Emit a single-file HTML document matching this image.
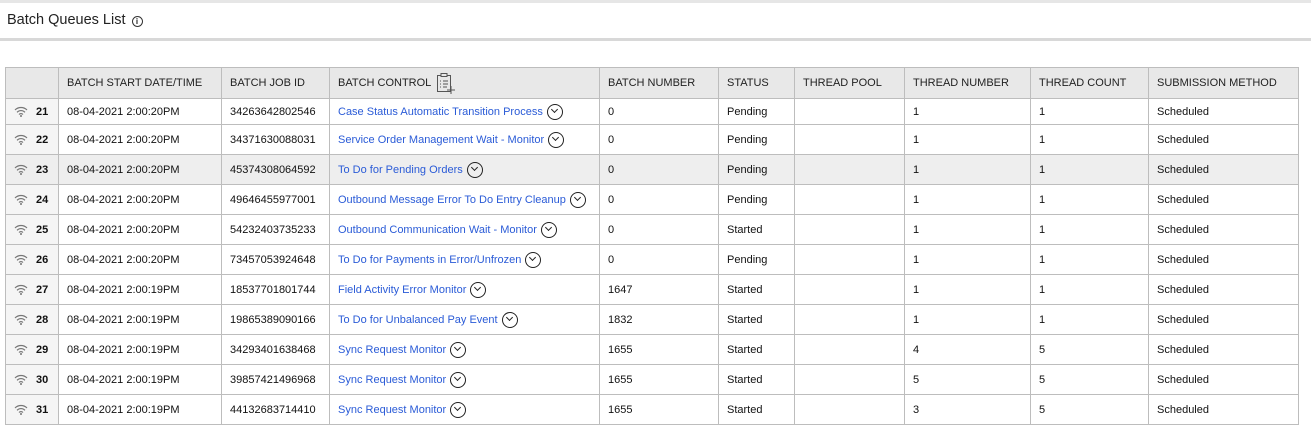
<!DOCTYPE html>
<html><head><meta charset="utf-8"><style>
*{margin:0;padding:0;box-sizing:border-box}
body{width:1311px;height:429px;background:#fff;font-family:"Liberation Sans",sans-serif;overflow:hidden;position:relative;color:#111}
.top{position:absolute;left:0;top:0;width:1311px;height:3px;background:#e6e6e6}
.title{position:absolute;left:7px;top:12px;font-size:14.5px;color:#222}
.title span{display:inline-block;width:11px;height:11px;border:1px solid #333;border-radius:50%;font-size:8px;text-align:center;line-height:9px;vertical-align:0;margin-left:2px;font-weight:bold}
.line{position:absolute;left:0;top:38px;width:1311px;height:3px;background:#d8d8d8}
table{position:absolute;left:5px;top:67px;border-collapse:collapse;table-layout:fixed;font-size:11px}
td,th{border:1px solid #bdbdbd;padding:0 0 0 8px;text-align:left;white-space:nowrap;overflow:hidden;line-height:14px}
th{background:#e8e8e8;font-weight:normal;height:31px;color:#222}
td{height:30px}
tr.f td{height:26px}
td.n{background:#f5f5f5;font-weight:bold;padding-left:8px}
tr.h td{background:#eeeeee}
a{color:#2a5bd7;text-decoration:none;vertical-align:middle}
.c{display:inline-block;width:16px;height:16px;border:1.5px solid #222;border-radius:50%;vertical-align:middle;margin-left:4px;position:relative}
.c:after{content:"";position:absolute;left:4px;top:2.5px;width:4px;height:4px;border-right:1.5px solid #222;border-bottom:1.5px solid #222;transform:rotate(45deg)}
.w{display:inline-block;vertical-align:-2px;margin-right:8px}
</style></head><body>
<div class="top"></div>
<div class="title">Batch Queues List <span>i</span></div>
<div class="line"></div>
<table>
<colgroup><col style="width:53px"><col style="width:163px"><col style="width:108px"><col style="width:270px"><col style="width:119px"><col style="width:76px"><col style="width:110px"><col style="width:126px"><col style="width:118px"><col style="width:150px"></colgroup>
<tr><th style="background:#e8e8e8"></th><th>BATCH START DATE/TIME</th><th>BATCH JOB ID</th><th>BATCH CONTROL <svg width="20" height="22" viewBox="0 0 20 22" style="vertical-align:middle;margin-left:2px"><rect x="1.5" y="3.5" width="13" height="16" fill="none" stroke="#555"/><rect x="5" y="1.5" width="6" height="3" fill="#e8e8e8" stroke="#555"/><path d="M4 9h1M7 9h5M4 12h1M7 12h5M4 15h1M7 15h4M15 14v8M11 18h8" stroke="#555" fill="none"/></svg></th><th>BATCH NUMBER</th><th>STATUS</th><th>THREAD POOL</th><th>THREAD NUMBER</th><th>THREAD COUNT</th><th>SUBMISSION METHOD</th></tr>
<tbody id="b"></tbody>
</table>
<script>
var d=[[21,"08-04-2021 2:00:20PM","34263642802546","Case Status Automatic Transition Process","0","Pending","1","1"],
[22,"08-04-2021 2:00:20PM","34371630088031","Service Order Management Wait - Monitor","0","Pending","1","1"],
[23,"08-04-2021 2:00:20PM","45374308064592","To Do for Pending Orders","0","Pending","1","1"],
[24,"08-04-2021 2:00:20PM","49646455977001","Outbound Message Error To Do Entry Cleanup","0","Pending","1","1"],
[25,"08-04-2021 2:00:20PM","54232403735233","Outbound Communication Wait - Monitor","0","Started","1","1"],
[26,"08-04-2021 2:00:20PM","73457053924648","To Do for Payments in Error/Unfrozen","0","Pending","1","1"],
[27,"08-04-2021 2:00:19PM","18537701801744","Field Activity Error Monitor","1647","Started","1","1"],
[28,"08-04-2021 2:00:19PM","19865389090166","To Do for Unbalanced Pay Event","1832","Started","1","1"],
[29,"08-04-2021 2:00:19PM","34293401638468","Sync Request Monitor","1655","Started","4","5"],
[30,"08-04-2021 2:00:19PM","39857421496968","Sync Request Monitor","1655","Started","5","5"],
[31,"08-04-2021 2:00:19PM","44132683714410","Sync Request Monitor","1655","Started","3","5"]];
var w='<svg class="w" width="14" height="11" viewBox="0 0 14 11"><path d="M1 4a8.5 8.5 0 0 1 12 0M3 6.3a5.5 5.5 0 0 1 8 0M5 8.5a2.8 2.8 0 0 1 4 0" stroke="#777" stroke-width="1.2" fill="none"/><circle cx="7" cy="10" r="1" fill="#777"/></svg>';
var h="";d.forEach(function(r,i){h+='<tr class="'+(i==0?'f':'')+(i==2?' h':'')+'"><td class="n">'+w+r[0]+'</td><td>'+r[1]+'</td><td>'+r[2]+'</td><td><a>'+r[3]+'</a><span class="c"></span></td><td>'+r[4]+'</td><td>'+r[5]+'</td><td></td><td>'+r[6]+'</td><td>'+r[7]+'</td><td>Scheduled</td></tr>'});
document.getElementById("b").innerHTML=h;
</script>
</body></html>
